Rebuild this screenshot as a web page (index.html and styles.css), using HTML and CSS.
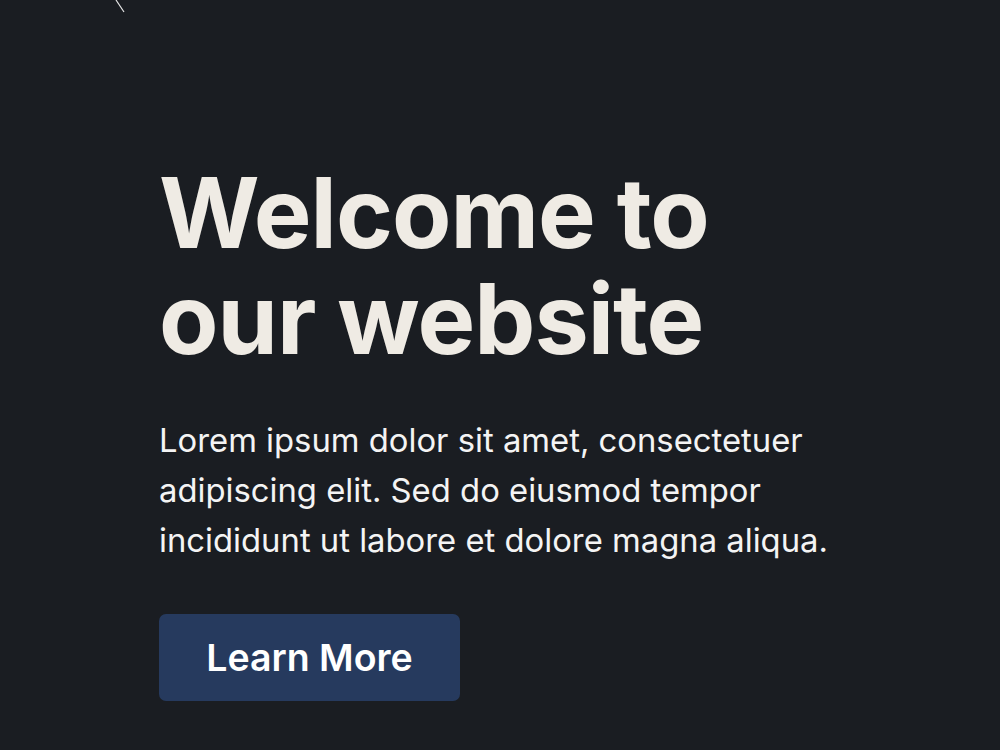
FILE: index.html
```html
<!DOCTYPE html>
<html lang="en">
<head>
  <meta charset="UTF-8">
  <meta name="viewport" content="width=device-width, initial-scale=1">
  <title>Welcome</title>
  <link rel="stylesheet" href="styles.css">
</head>
<body>
  <svg class="streak" width="20" height="20" viewBox="0 0 20 20">
    <line x1="1" y1="0" x2="9" y2="12" stroke="#e8e8e8" stroke-width="1.2"/>
  </svg>

  <section class="hero">
    <h1>Welcome to<br>our website</h1>
    <p>Lorem ipsum dolor sit amet, consectetuer adipiscing elit. Sed do eiusmod tempor incididunt ut labore et dolore magna aliqua.</p>
    <a href="#" class="btn">Learn More</a>
  </section>
</body>
</html>
```

FILE: styles.css
```css
body {
  margin: 0;
  background: #1a1d22;
  font-family: Inter, "Liberation Sans", sans-serif;
  color: #f2f2f2;
  height: 750px;
  overflow: hidden;
}

.streak {
  position: absolute;
  left: 115px;
  top: 0;
}

.hero {
  padding: 160px 0 0 159px;
}

h1 {
  margin: 0;
  font-size: 97px;
  line-height: 106px;
  font-weight: 700;
  letter-spacing: -1px;
  color: #efebe4;
}

p {
  margin: 43px 0 0;
  max-width: 720px;
  font-size: 32.8px;
  line-height: 50px;
  color: #f4f4f4;
}

.btn {
  display: inline-flex;
  align-items: center;
  justify-content: center;
  margin-top: 49px;
  width: 301px;
  height: 87px;
  background: #263a5e;
  border-radius: 7px;
  color: #ffffff;
  font-size: 37.5px;
  font-weight: 600;
  text-decoration: none;
}
```
